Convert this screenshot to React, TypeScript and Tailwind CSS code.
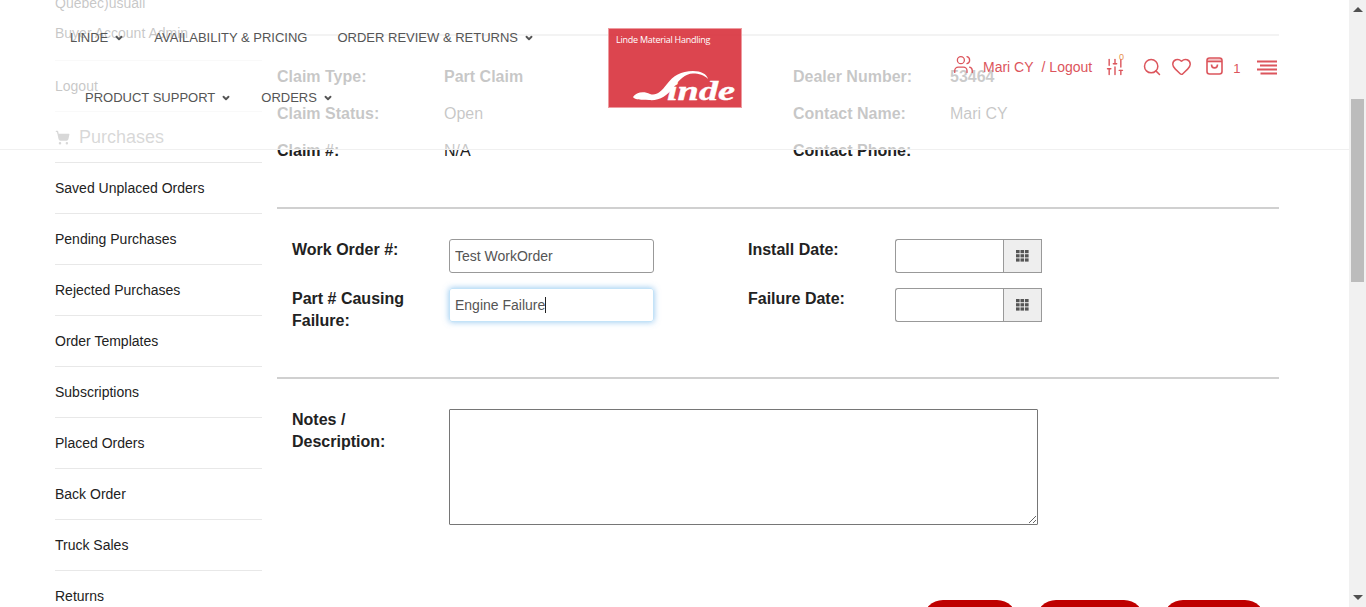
import { ChevronDown, Search, Heart, SlidersVertical, Users, ShoppingCart } from "lucide-react";

const side = ["Saved Unplaced Orders", "Pending Purchases", "Rejected Purchases", "Order Templates", "Subscriptions", "Placed Orders", "Back Order", "Truck Sales", "Returns"];

function NavItem({ label, caret = true }: { label: string; caret?: boolean }) {
  return (
    <span className="flex items-center gap-[6px] whitespace-nowrap">
      {label}
      {caret && <ChevronDown size={10} strokeWidth={4.5} />}
    </span>
  );
}

function Grid3x3() {
  return (
    <svg width="13" height="12" viewBox="0 0 13 12" fill="#555">
      {[0, 4.5, 9].map((x) => [0, 4.2, 8.4].map((y) => <rect key={`${x}-${y}`} x={x} y={y} width="3.6" height="3.2" />))}
    </svg>
  );
}

function DateField() {
  return (
    <div className="flex h-[34px] w-[147px]">
      <input readOnly className="h-full w-[108px] rounded-l-[3px] border border-r-0 border-[#999] bg-white" />
      <div className="flex w-[39px] items-center justify-center border border-[#999] bg-[#eeeeee]">
        <Grid3x3 />
      </div>
    </div>
  );
}

export default function App() {
  return (
    <div className="relative flex h-[607px] w-[1366px] overflow-hidden bg-white text-[14px] text-[#222]" style={{ fontFamily: '"Liberation Sans", Arial, sans-serif' }}>
      <div className="flex-1 overflow-hidden">
        <div className="flex">
          {/* sidebar */}
          <aside className="-mt-[12px] ml-[55px] w-[207px] shrink-0">
            <div className="border-b border-[#e8e8e8] pb-3 leading-[30px]">
              <div>Quebec)usuall</div>
              <div>Buyer Account Admin</div>
            </div>
            <div className="flex h-[51px] items-center border-b border-[#e8e8e8]">Logout</div>
            <div className="flex h-[51px] items-center gap-[9px] border-b border-[#e8e8e8] text-[18px] text-[#666]">
              <ShoppingCart size={15} fill="#666" strokeWidth={2} />
              Purchases
            </div>
            {side.map((s) => (
              <div key={s} className="flex h-[51px] items-center border-b border-[#e8e8e8]">{s}</div>
            ))}
          </aside>

          {/* main */}
          <main className="ml-[15px] w-[1002px] shrink-0 pt-[34px]">
            <div className="grid grid-cols-[167px_349px_157px_1fr] border-t-2 border-[#d0d0d0] pt-[22px] text-[16px] leading-[37px]">
              <b>Claim Type:</b><b className="text-[#222]">Part Claim</b><b>Dealer Number:</b><b className="text-[#333]">53464</b>
              <b>Claim Status:</b><span>Open</span><b>Contact Name:</b><span>Mari CY</span>
              <b>Claim #:</b><span>N/A</span><b>Contact Phone:</b><span></span>
            </div>

            <div className="mt-[38px] border-t-2 border-[#d0d0d0] pl-[15px] pt-[29px]">
              <div className="grid grid-cols-[157px_205px_94px_147px_1fr] grid-rows-[49px_90px] text-[16px] leading-[22px]">
                <b className="pt-px">Work Order #:</b>
                <input readOnly value="Test WorkOrder" className="mt-px h-[34px] rounded-[3px] border border-[#999] px-[5px] text-[14px] text-[#555] outline-none" />
                <span></span>
                <b className="pt-px">Install Date:</b>
                <div className="mt-px"><DateField /></div>
                <b className="pt-px">Part # Causing<br />Failure:</b>
                <div className="mt-px flex h-[34px] items-center whitespace-nowrap rounded-[3px] border border-[#c4e3f8] px-[5px] text-[14px] text-[#555] shadow-[0_0_6px_rgba(102,175,233,0.7)]">
                  Engine Failure<span className="h-[16px] w-px bg-[#222]"></span>
                </div>
                <span></span>
                <b className="pt-px">Failure Date:</b>
                <div className="mt-px"><DateField /></div>
              </div>
            </div>

            <div className="border-t-2 border-[#d0d0d0] pl-[15px] pt-[29px]">
              <div className="grid grid-cols-[157px_589px] text-[16px] leading-[22px]">
                <b className="pt-px">Notes /<br />Description:</b>
                <textarea readOnly className="mt-px h-[116px] rounded-[1px] border border-[#767676] outline-none" />
              </div>
            </div>

            <div className="mt-[75px] flex justify-end gap-[19px] pr-[14px]">
              <div className="h-[40px] w-[94px] rounded-[20px] bg-[#bf0000]"></div>
              <div className="h-[40px] w-[108px] rounded-[20px] bg-[#bf0000]"></div>
              <div className="h-[40px] w-[102px] rounded-[20px] bg-[#bf0000]"></div>
            </div>
          </main>
        </div>
      </div>

      {/* scrollbar */}
      <div className="flex h-full w-[17px] shrink-0 flex-col items-center bg-[#f1f1f1]">
        <div className="mt-[7px] h-0 w-0 border-x-[5px] border-b-[5px] border-x-transparent border-b-[#505050]"></div>
        <div className="mt-[87px] h-[183px] w-[13px] bg-[#bcbcbc]"></div>
        <div className="mt-[313px] h-0 w-0 border-x-[5px] border-t-[5px] border-x-transparent border-t-[#505050]"></div>
      </div>

      {/* translucent sticky header */}
      <header className="absolute left-0 top-0 flex h-[150px] w-[1349px] border-b border-[#f0f0f0] bg-white/75 text-[13px] text-[#555]">
        <nav className="w-[608px] shrink-0 pt-[28px]">
          <div className="flex h-[20px] items-center gap-[30px] pl-[70px]">
            <NavItem label="LINDE" />
            <NavItem label="AVAILABILITY & PRICING" caret={false} />
            <NavItem label="ORDER REVIEW & RETURNS" />
          </div>
          <div className="mt-[40px] flex h-[20px] items-center gap-[30px] pl-[85px]">
            <NavItem label="PRODUCT SUPPORT" />
            <NavItem label="ORDERS" />
          </div>
        </nav>

        <div className="mt-[28px] flex h-[80px] w-[134px] shrink-0 flex-col border border-[#ee9ba0] bg-[#d8313c]/90 text-white">
          <span className="ml-[7px] mt-[5px] h-[26px] whitespace-nowrap text-[9px] leading-[12px]" style={{ fontFamily: '"Open Sans", sans-serif', letterSpacing: "-0.25px" }}>Linde Material Handling</span>
          <svg width="132" height="46" viewBox="0 0 132 46">
            <path d="M24 37 C27 32 35 31 41 34 C47 36 52 32 58 24 C64 16 72 11 84 11 C92 11 98 14 99 19 C95 15 90 13.500 84 13.500 C76 13.500 70 20 65 27 C58 36 50 41 40 40 C34 39 27 41 24 37Z" fill="#fff" />
            <text x="58" y="40" fill="#fff" stroke="#fff" strokeWidth="0.4" fontSize="27" fontWeight="700" fontStyle="italic" textLength="68" lengthAdjust="spacingAndGlyphs" fontFamily="Liberation Serif, serif">inde</text>
          </svg>
        </div>

        <div className="relative ml-[211px] flex h-fit items-center pt-[56px] text-[14px] text-[#dc555c]">
          <Users size={21} strokeWidth={1.5} className="-mt-[6px]" />
          <span className="ml-[9px] whitespace-nowrap">Mari CY</span>
          <span className="ml-[8px] whitespace-nowrap">/ Logout</span>
          <SlidersVertical size={20} strokeWidth={1.7} className="ml-[13px]" />
          <span className="absolute left-[166px] top-[51px] text-[9px] text-[#e8904f]">0</span>
          <Search size={20} strokeWidth={1.8} className="ml-[17px]" />
          <Heart size={21} strokeWidth={1.7} className="-mt-[2px] ml-[9px]" />
          <svg width="17" height="18" viewBox="0 0 17 18" stroke="currentColor" strokeWidth="1.6" fill="none" className="-mt-[2px] ml-[14px]">
            <rect x="1" y="1" width="15" height="16" rx="2.500" />
            <path d="M1 4.500h15" />
            <path d="M1.500 1.500h14v3h-14z" fill="currentColor" fillOpacity="0.35" stroke="none" />
            <path d="M5.500 7.500c0 4.500 6 4.500 6 0" />
          </svg>
          <span className="ml-[10px] mt-[3px] text-[13px]">1</span>
          <svg width="20" height="15" viewBox="0 0 20 15" stroke="currentColor" strokeWidth="1.9" className="ml-[17px]">
            <path d="M0 1.500h20M3 5.500h17M0 9.500h20M3.500 13.500h16.500" />
          </svg>
        </div>
      </header>
    </div>
  );
}
